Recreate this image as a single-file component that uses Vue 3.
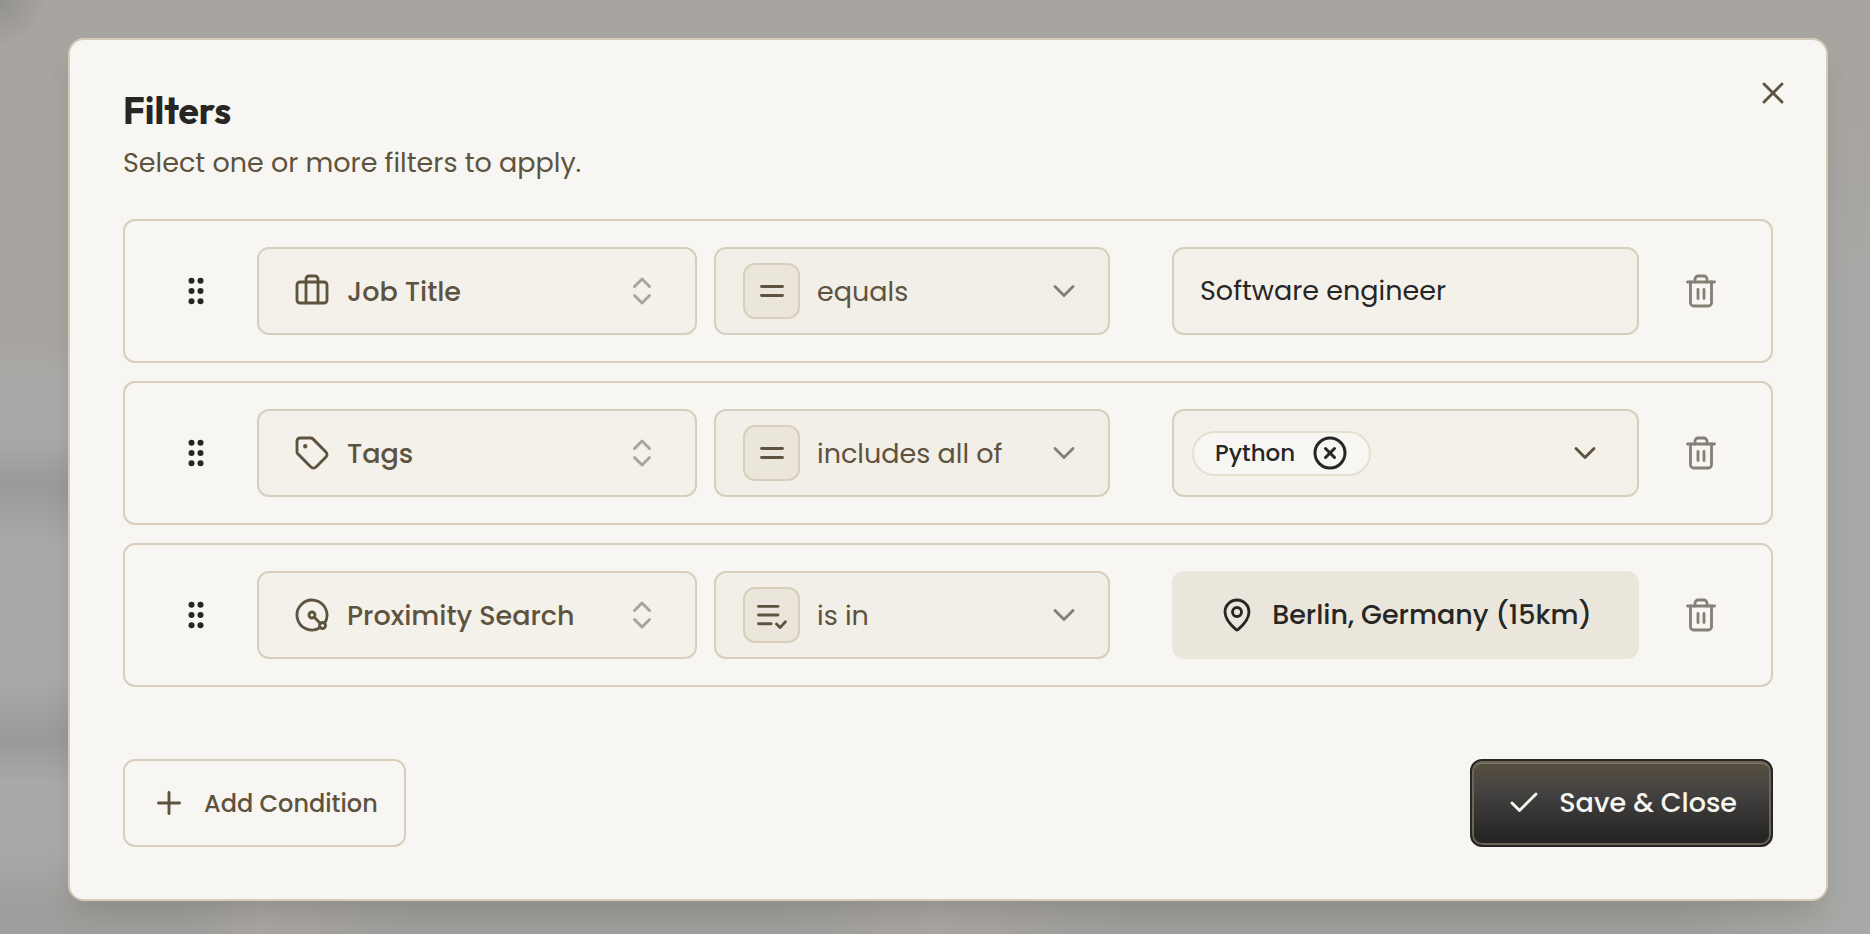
<script setup>
    import { h, ref } from "vue";

    const shapes = {
        close: ["M18 6 6 18", "m6 6 12 12"],
        plus: ["M5 12h14", "M12 5v14"],
        check: ["M20 6 9 17l-5-5"],
        equal: ["M5 9h14", "M5 15h14"],
        chevron: ["m6 9 6 6 6-6"],
        sort: ["m7 15 5 5 5-5", "m7 9 5-5 5 5"],
        listCheck: ["M3 6.2h13", "M3 12h13", "M3 17.8h8.4", "m15 18 2.4 2.4 3.6-3.9"],
        briefcase: [
            "M16 20V4a2 2 0 0 0-2-2h-4a2 2 0 0 0-2 2v16",
            "M4 6h16a2 2 0 0 1 2 2v10a2 2 0 0 1-2 2H4a2 2 0 0 1-2-2V8a2 2 0 0 1 2-2z"
        ],
        tag: [
            "M12.586 2.586A2 2 0 0 0 11.172 2H4a2 2 0 0 0-2 2v7.172a2 2 0 0 0 .586 1.414l8.704 8.704a2.426 2.426 0 0 0 3.42 0l6.58-6.58a2.426 2.426 0 0 0 0-3.42z",
            "M7 7.5a.5.5 0 1 0 1 0 .5.5 0 1 0-1 0"
        ],
        radius: [
            "M20.34 17.52a10 10 0 1 0-2.82 2.82",
            "M17 19a2 2 0 1 0 4 0 2 2 0 1 0-4 0",
            "m13.41 13.41 4.18 4.18",
            "M10 12a2 2 0 1 0 4 0 2 2 0 1 0-4 0"
        ],
        pin: [
            "M20 10c0 4.993-5.539 10.193-7.399 11.799a1 1 0 0 1-1.202 0C9.539 20.193 4 14.993 4 10a8 8 0 0 1 16 0",
            "M9 10a3 3 0 1 0 6 0 3 3 0 1 0-6 0"
        ],
        trash: [
            "M3 6h18",
            "M19 6v14c0 1-1 2-2 2H7c-1 0-2-1-2-2V6",
            "M8 6V4c0-1 1-2 2-2h4c1 0 2 1 2 2v2",
            "M10 11v6",
            "M14 11v6"
        ],
        circleX: ["M2 12a10 10 0 1 0 20 0 10 10 0 1 0-20 0", "m15 9-6 6", "m9 9 6 6"],
        // zero-length strokes with round caps give the six dots
        grip: ["M9 5.2h.01", "M9 12h.01", "M9 18.8h.01", "M15 5.2h.01", "M15 12h.01", "M15 18.8h.01"]
    };

    const Icon = (props) => h("svg", {
        class: "icon",
        viewBox: "0 0 24 24",
        fill: "none",
        stroke: "currentColor",
        "stroke-linecap": "round",
        "stroke-linejoin": "round",
        "aria-hidden": "true"
    }, shapes[props.name].map((d) => h("path", { d })));
    Icon.props = ["name"];

    const fields = ["Job Title", "Tags", "Proximity Search"];
    const operators = ["equals", "includes all of", "is in"];
    const fieldIcons = { "Job Title": "briefcase", "Tags": "tag", "Proximity Search": "radius" };

    const ouvert = ref(true);
    const filters = ref([
        { id: 1, field: "Job Title", operator: "equals", type: "text", value: "Software engineer" },
        { id: 2, field: "Tags", operator: "includes all of", type: "tags", value: ["Python"] },
        { id: 3, field: "Proximity Search", operator: "is in", type: "place", value: "Berlin, Germany (15km)" }
    ]);
    let nextId = 4;

    const addCondition = () => {
        filters.value.push({ id: nextId++, field: "Job Title", operator: "equals", type: "text", value: "" });
    };
    const removeCondition = (id) => {
        filters.value = filters.value.filter((f) => f.id !== id);
    };
</script>

<template>
    <div class="overlay">
        <section v-if="ouvert" class="modal" role="dialog" aria-labelledby="modalTitle" aria-describedby="modalDesc">
            <button class="close-modal" type="button" aria-label="Close" @click="ouvert = false">
                <Icon name="close" />
            </button>

            <h1 id="modalTitle">Filters</h1>
            <p id="modalDesc">Select one or more filters to apply.</p>

            <ul class="conditions">
                <li v-for="f in filters" :key="f.id" class="condition">
                    <button class="square grip" type="button" aria-label="Reorder condition">
                        <Icon name="grip" />
                    </button>

                    <label class="box field">
                        <Icon :name="fieldIcons[f.field]" />
                        <select v-model="f.field" aria-label="Field">
                            <option v-for="o in fields" :key="o">{{ o }}</option>
                        </select>
                        <Icon name="sort" class="sort" />
                    </label>

                    <label class="box operator">
                        <span class="badge">
                            <Icon :name="f.operator === 'is in' ? 'listCheck' : 'equal'" />
                        </span>
                        <select v-model="f.operator" aria-label="Operator">
                            <option v-for="o in operators" :key="o">{{ o }}</option>
                        </select>
                        <Icon name="chevron" class="muted" />
                    </label>

                    <input v-if="f.type === 'text'" v-model="f.value" class="box value text" type="text" aria-label="Value">

                    <div v-else-if="f.type === 'tags'" class="box value tags">
                        <span v-for="(t, i) in f.value" :key="t" class="chip">
                            {{ t }}
                            <button type="button" :aria-label="'Remove ' + t" @click="f.value.splice(i, 1)">
                                <Icon name="circleX" />
                            </button>
                        </span>
                        <input type="text" aria-label="Add a tag">
                        <button type="button" aria-label="Show tags">
                            <Icon name="chevron" />
                        </button>
                    </div>

                    <button v-else class="box value place" type="button">
                        <Icon name="pin" />
                        {{ f.value }}
                    </button>

                    <button class="square muted" type="button" aria-label="Delete condition" @click="removeCondition(f.id)">
                        <Icon name="trash" />
                    </button>
                </li>
            </ul>

            <footer>
                <button class="box add" type="button" @click="addCondition">
                    <Icon name="plus" />
                    Add Condition
                </button>
                <button class="box save" type="button" @click="ouvert = false">
                    <Icon name="check" />
                    Save &amp; Close
                </button>
            </footer>
        </section>
    </div>
</template>

<style>
    body {
        margin: 0;
        background: #a8a4a0;
    }
</style>

<style scoped>
    * {
        box-sizing: border-box;
    }

    button,
    input,
    select {
        margin: 0;
        padding: 0;
        border: none;
        outline: none;
        background: none;
        color: inherit;
        font: inherit;
    }

    button {
        display: flex;
        align-items: center;
        justify-content: center;
        cursor: pointer;
    }

    .overlay {
        min-height: 100vh;
        padding: 38px 42px 32px 68px;
        font-family: Poppins, Inter, sans-serif;
        font-size: 27px;
        color: #5e533f;
        background:
            radial-gradient(circle at 0 0, #92918c 0, transparent 45px),
            linear-gradient(to right, #9f9e9c 10%, #a9a5a2 14%, #9f9e9c 22%, #9f9e9c 42%, #a9a5a2 50%, #9f9e9c 60%, #9f9e9c 90%, #a8a8a6 98%) bottom / 100% 32px no-repeat,
            linear-gradient(
                #a8a4a0 36%, #a9a9a7 40%, #a9a9a7 47%, #9a9997 52%, #a9a9a7 58%,
                #a9a9a7 73%, #9a9997 79%, #a9a9a7 84%, #a9a9a7 91%, #9f9e9c 97%
            ) left / 80px 100% no-repeat,
            linear-gradient(#a8a4a0 10%, #a8a8a6 30%) right / 42px 100% no-repeat,
            #a8a4a0;
    }

    .modal {
        position: relative;
        padding: 51px 53px 52px;
        border: 2px solid #d6cbb8;
        border-radius: 16px;
        background: #f7f6f2;
        box-shadow: 0 18px 28px -8px rgba(60, 60, 50, 0.2);
    }

    .icon {
        flex: none;
        width: 36px;
        height: 36px;
        stroke-width: 1.9;
    }

    .close-modal {
        position: absolute;
        top: 35px;
        right: 35px;
    }

    h1 {
        margin: 0 0 12px;
        font-family: Outfit, Inter, sans-serif;
        font-size: 37px;
        font-weight: 700;
        line-height: 40px;
        color: #262624;
    }

    p {
        margin: 0 0 36px;
        line-height: 40px;
    }

    .conditions {
        display: flex;
        flex-direction: column;
        gap: 18px;
        margin: 0;
        padding: 0;
        list-style: none;
    }

    .condition {
        display: grid;
        grid-template-columns: 89px minmax(0, 440fr) minmax(0, 396fr) minmax(0, 512fr) 89px;
        gap: 17px;
        padding: 26px;
        border: 2px solid #d8cebb;
        border-radius: 12px;
    }

    .square {
        height: 88px;
    }

    .grip {
        color: #262624;
        cursor: grab;
    }

    .grip .icon {
        stroke-width: 4;
    }

    .box {
        display: flex;
        align-items: center;
        gap: 17px;
        height: 88px;
        border: 2px solid #d8cebb;
        border-radius: 12px;
        background: #f4f1eb;
    }

    .box select {
        flex: 1;
        min-width: 0;
        height: 40px;
        appearance: none;
        cursor: pointer;
    }

    .field {
        padding: 0 35px;
        font-weight: 500;
    }

    .operator {
        padding: 0 26px 0 27px;
        background: #f2eee8;
    }

    .value {
        margin-left: 45px;
        color: #262624;
    }

    .sort {
        color: #a7a39d;
    }

    .muted {
        color: #858076;
    }

    .badge {
        display: flex;
        align-items: center;
        justify-content: center;
        flex: none;
        width: 57px;
        height: 56px;
        border: 2px solid #d8cebb;
        border-radius: 12px;
        background: #eae6db;
    }

    .text {
        padding: 0 26px;
    }

    .tags {
        padding: 0 34px 0 18px;
        color: #5e533f;
    }

    .tags input {
        flex: 1;
        min-width: 0;
        height: 40px;
    }

    .chip {
        display: flex;
        align-items: center;
        gap: 17px;
        height: 45px;
        padding: 0 21px;
        border: 2px solid #e5dfd0;
        border-radius: 23px;
        background: #f7f6f2;
        color: #262624;
        font-size: 23px;
        font-weight: 500;
    }

    .chip .icon {
        stroke-width: 2;
    }

    .place {
        border-color: #eae6db;
        background: #eae6db;
        font-weight: 500;
    }

    footer {
        display: flex;
        justify-content: space-between;
        margin-top: 72px;
        font-weight: 500;
    }

    .add {
        padding: 0 26px;
        background: none;
        font-size: 24px;
    }

    .save {
        padding: 0 34px;
        border-color: #262624;
        background: linear-gradient(#575040, #434140 40%, #262624 90%);
        box-shadow: inset 0 0 0 2px #6c6555, inset 0 3px 0 #7e7868;
        color: #f7f6f2;
    }
</style>
